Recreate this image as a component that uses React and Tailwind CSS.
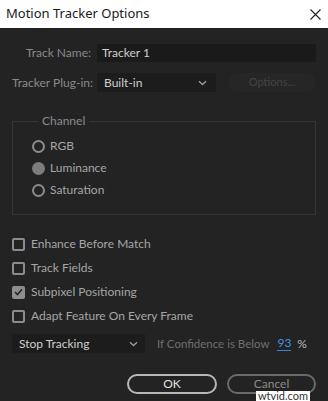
import React, { useState } from 'react';

const FONT = { fontFamily: 'Lato, "Noto Sans", sans-serif' };

function Chevron({ className = '' }) {
  return (
    <svg width="9" height="6" viewBox="0 0 9 6" className={className}>
      <path d="M1 1.2 L4.5 4.6 L8 1.2" fill="none" stroke="#9a9a9a" strokeWidth="1.4" />
    </svg>
  );
}

function Radio({ label, checked, onClick }) {
  return (
    <div className="flex h-[22px] items-center gap-[5px] cursor-default" onClick={onClick}>
      {checked ? (
        <span className="h-[13px] w-[13px] rounded-full bg-[#7d7d7d]" />
      ) : (
        <span className="h-[13px] w-[13px] rounded-full border-2 border-[#8c8c8c]" />
      )}
      <span className="text-[12px] text-[#a6a6a6]">{label}</span>
    </div>
  );
}

function Check({ label, checked, onClick }) {
  return (
    <div className="flex h-[24px] items-center gap-[6px] cursor-default" onClick={onClick}>
      {checked ? (
        <span className="flex h-[13px] w-[13px] items-center justify-center rounded-[2px] bg-[#8e8e8e]">
          <svg width="9" height="8" viewBox="0 0 9 8">
            <path d="M1 4 L3.5 6.5 L8 1.2" fill="none" stroke="#262626" strokeWidth="1.6" />
          </svg>
        </span>
      ) : (
        <span className="h-[13px] w-[13px] rounded-[2px] border-2 border-[#8c8c8c]" />
      )}
      <span className="whitespace-nowrap text-[12px] text-[#a6a6a6]">{label}</span>
    </div>
  );
}

export default function App() {
  const [channel, setChannel] = useState('Luminance');
  const [checks, setChecks] = useState({
    enhance: false,
    fields: false,
    subpixel: true,
    adapt: false
  });
  const toggle = (k) => setChecks({ ...checks, [k]: !checks[k] });

  return (
    <div className="relative h-[401px] w-[328px] overflow-hidden bg-[#232323]" style={FONT}>
      {/* title bar */}
      <div
        className="flex h-[28px] items-center justify-between bg-white pl-[6px] pr-[7px]"
        style={{ fontFamily: '"Noto Sans", sans-serif' }}
      >
        <span className="text-[13px] text-[#1a1a1a]">Motion Tracker Options</span>
        <svg width="11" height="11" viewBox="0 0 11 11">
          <path d="M0.5 0.5 L10.5 10.5 M10.5 0.5 L0.5 10.5" stroke="#222" strokeWidth="1.1" />
        </svg>
      </div>

      <div className="flex flex-col px-[12px] pt-[16px]">
        {/* track name */}
        <div className="flex h-[18px] items-center">
          <span className="w-[85px] whitespace-nowrap pr-[6px] text-right text-[12px] text-[#8a8a8a]">Track Name:</span>
          <div className="flex h-[18px] flex-1 items-center bg-[#1a1a1a] px-[5px] text-[12px] text-[#cfcfcf]">
            Tracker 1
          </div>
        </div>

        {/* plug-in */}
        <div className="mt-[11px] flex h-[19px] items-center">
          <span className="w-[85px] whitespace-nowrap pr-[6px] text-right text-[12px] text-[#8a8a8a]">Tracker Plug-in:</span>
          <div className="flex h-[19px] w-[119px] items-center justify-between bg-[#1c1c1c] pl-[7px] pr-[9px] text-[12px] text-[#cfcfcf]">
            <span>Built-in</span>
            <Chevron />
          </div>
          <div className="ml-[12px] flex h-[19px] flex-1 items-center justify-center rounded-full bg-[#262626] text-[11px] text-[#454545]">
            Options...
          </div>
        </div>

        {/* channel */}
        <fieldset className="mt-[21px] border border-[#353535] pb-[13px] pl-[19px] pt-[6px]">
          <legend className="ml-[6px] px-[4px] text-[12px] leading-[16px] text-[#8a8a8a]">Channel</legend>
          {['RGB', 'Luminance', 'Saturation'].map((c) => (
            <Radio key={c} label={c} checked={channel === c} onClick={() => setChannel(c)} />
          ))}
        </fieldset>

        {/* options */}
        <div className="mt-[17px] flex flex-col">
          <Check label="Enhance Before Match" checked={checks.enhance} onClick={() => toggle('enhance')} />
          <Check label="Track Fields" checked={checks.fields} onClick={() => toggle('fields')} />
          <Check label="Subpixel Positioning" checked={checks.subpixel} onClick={() => toggle('subpixel')} />
          <Check label="Adapt Feature On Every Frame" checked={checks.adapt} onClick={() => toggle('adapt')} />
        </div>

        {/* confidence */}
        <div className="mt-[6px] flex h-[19px] items-center">
          <div className="flex h-[19px] w-[133px] items-center justify-between bg-[#1c1c1c] pl-[7px] pr-[7px] text-[12px] text-[#cfcfcf]">
            <span>Stop Tracking</span>
            <Chevron />
          </div>
          <span className="ml-[12px] whitespace-nowrap text-[11.5px] text-[#6f6f6f]">If Confidence is Below</span>
          <span className="ml-[8px] border-b border-[#3b7fd6] text-[12px] leading-[14px] text-[#4a8fe0]">93</span>
          <span className="ml-[6px] text-[12px] text-[#bdbdbd]">%</span>
        </div>

        {/* buttons */}
        <div className="mt-[21px] flex justify-end gap-[10px]">
          <button className="flex h-[20px] w-[90px] items-center justify-center rounded-full border-2 border-[#b8b8b8] text-[12px] leading-[14px] text-[#e0e0e0]">
            OK
          </button>
          <button className="flex h-[20px] w-[89px] items-center justify-center rounded-full border-2 border-[#6a6a6a] text-[12px] leading-[14px] text-[#8a8a8a]">
            Cancel
          </button>
        </div>
      </div>

      {/* watermark */}
      <div className="absolute bottom-0 right-[18px] bg-white px-[2px] text-[11px] leading-[10px] text-[#333]">
        wtvid.com
      </div>
    </div>
  );
}
